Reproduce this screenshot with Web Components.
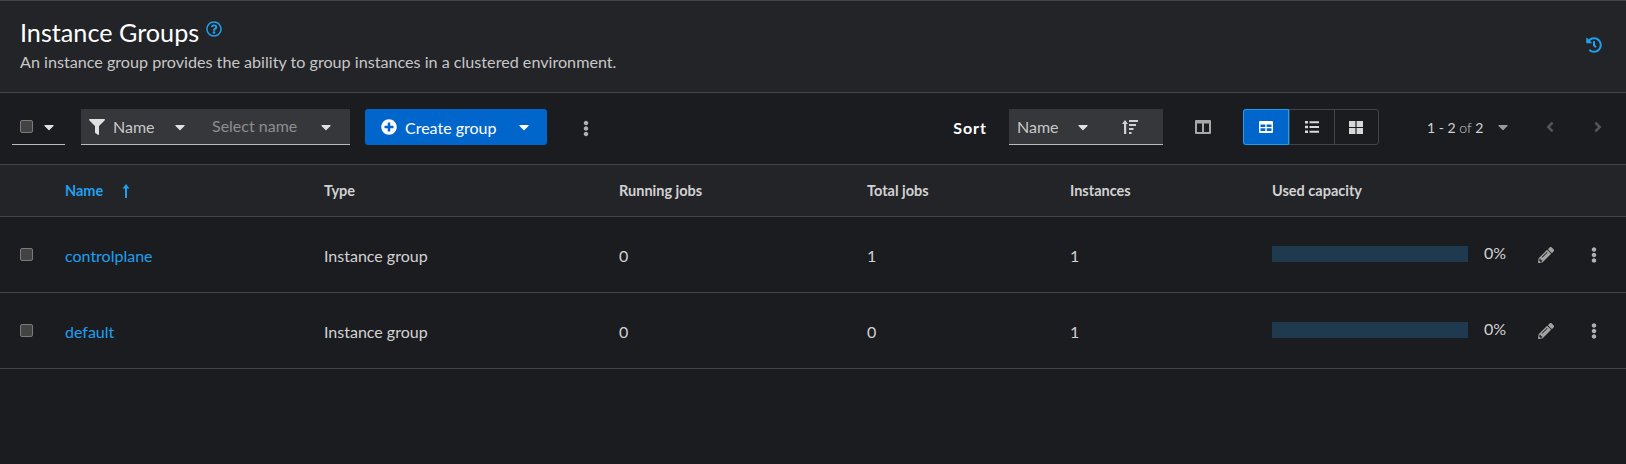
<!DOCTYPE html>
<html lang="en"><head><meta charset="utf-8"><title>Instance Groups</title>
<style>
html,body{margin:0;background:#1b1c20;height:100%;overflow:hidden}
body{font-family:Lato,"Noto Sans",sans-serif;color:#e0e0e0}
</style></head><body>
<ig-app></ig-app>
<script>
const P={
caret:['0 0 320 512','M31.3 192h257.3c17.8 0 26.7 21.5 14.1 34.1L174.1 354.8c-7.8 7.8-20.5 7.8-28.3 0L17.2 226.1C4.6 213.5 13.5 192 31.3 192z'],
filter:['0 0 512 512','M487.976 0H24.028C2.71 0-8.047 25.866 7.058 40.971L192 225.941V432c0 7.831 3.821 15.17 10.237 19.662l80 55.98C298.02 518.69 320 507.493 320 487.98V225.941l184.947-184.97C520.021 25.896 509.338 0 487.976 0z'],
plus:['0 0 512 512','M256 8C119 8 8 119 8 256s111 248 248 248 248-111 248-248S393 8 256 8zm144 276c0 6.6-5.4 12-12 12h-92v92c0 6.6-5.4 12-12 12h-56c-6.6 0-12-5.4-12-12v-92h-92c-6.6 0-12-5.4-12-12v-56c0-6.6 5.4-12 12-12h92v-92c0-6.6 5.4-12 12-12h56c6.6 0 12 5.4 12 12v92h92c6.6 0 12 5.4 12 12v56z'],
kebab:['0 0 192 512','M96 184c39.8 0 72 32.2 72 72s-32.2 72-72 72-72-32.2-72-72 32.2-72 72-72zM24 80c0 39.8 32.2 72 72 72s72-32.2 72-72S135.8 8 96 8 24 40.2 24 80zm0 352c0 39.8 32.2 72 72 72s72-32.2 72-72-32.2-72-72-72-72 32.2-72 72z'],
pencil:['0 0 512 512','M497.9 142.1l-46.1 46.1c-4.7 4.7-12.3 4.7-17 0l-111-111c-4.7-4.7-4.7-12.3 0-17l46.1-46.1c18.7-18.7 49.1-18.7 67.9 0l60.1 60.1c18.8 18.7 18.8 49.1 0 67.9zM284.2 99.8L21.6 362.4.4 483.9c-2.9 16.4 11.4 30.6 27.8 27.8l121.5-21.3 262.6-262.6c4.7-4.7 4.7-12.3 0-17l-111-111c-4.8-4.7-12.4-4.7-17.1 0zM124.1 339.9c-5.5-5.5-5.5-14.3 0-19.8l154-154c5.5-5.5 14.3-5.5 19.8 0s5.5 14.3 0 19.8l-154 154c-5.5 5.5-14.3 5.5-19.8 0zM88 424h48v36.3l-64.5 11.3-31.1-31.1L51.7 376H88v48z'],
help:['0 0 512 512','M256 8C119.043 8 8 119.083 8 256c0 136.997 111.043 248 248 248s248-111.003 248-248C504 119.083 392.957 8 256 8zm0 448c-110.532 0-200-89.431-200-200 0-110.495 89.472-200 200-200 110.491 0 200 89.471 200 200 0 110.53-89.431 200-200 200zm107.244-255.2c0 67.052-72.421 68.084-72.421 92.863V300c0 6.627-5.373 12-12 12h-45.647c-6.627 0-12-5.373-12-12v-8.659c0-35.745 27.1-50.034 47.579-61.516 17.561-9.845 28.324-16.541 28.324-29.579 0-17.246-21.999-28.693-39.784-28.693-23.189 0-33.894 10.977-48.942 29.969-4.057 5.12-11.46 6.071-16.666 2.124l-27.824-21.098c-5.107-3.872-6.251-11.066-2.644-16.363C184.846 131.491 214.94 112 261.794 112c49.071 0 101.45 38.304 101.45 88.8zM298 368c0 23.159-18.841 42-42 42s-42-18.841-42-42 18.841-42 42-42 42 18.841 42 42z'],
history:['0 0 512 512','M504 255.531c.253 136.64-111.18 248.372-247.82 248.468-59.015.042-113.223-20.53-155.822-54.911-11.077-8.94-11.905-25.541-1.839-35.607l11.267-11.267c8.609-8.609 22.353-9.551 31.891-1.984C173.062 425.135 212.781 440 256 440c101.705 0 184-82.311 184-184 0-101.705-82.311-184-184-184-48.814 0-93.149 18.969-126.068 49.932l50.754 50.754c10.08 10.08 2.941 27.314-11.313 27.314H24c-8.837 0-16-7.163-16-16V38.627c0-14.254 17.234-21.393 27.314-11.314l49.372 49.372C129.209 34.136 189.552 8 256 8c136.81 0 247.747 110.78 248 247.531zm-180.912 78.784l9.823-12.63c8.138-10.463 6.253-25.542-4.21-33.679L288 256.349V152c0-13.255-10.745-24-24-24h-16c-13.255 0-24 10.745-24 24v135.651l65.409 50.874c10.463 8.137 25.541 6.253 33.679-4.21z'],
sort:['0 0 16 14','M3 0L6 4H4.200V14H2V4H0zM7 0H16V2H7zM7 4H14V6H7zM7 8H11.500V10H7zM7 12H9.500V14H7z'],
columns:['0 0 16 14','M1 0H15a1 1 0 0 1 1 1V13a1 1 0 0 1-1 1H1a1 1 0 0 1-1-1V1a1 1 0 0 1 1-1zM2 3.500V12H7V3.500zM9 3.500V12H14V3.500z'],
tbl:['0 0 14 12','M1 0H13a1 1 0 0 1 1 1V11a1 1 0 0 1-1 1H1a1 1 0 0 1-1-1V1a1 1 0 0 1 1-1zM1.500 3.500V6H6.300V3.500zM7.700 3.500V6H12.500V3.500zM1.500 7.300V10H6.300V7.300zM7.700 7.300V10H12.500V7.300z'],
list:['0 0 14 12','M0 0H3V2.500H0zM4.500 .3H14V2.200H4.500zM0 4.800H3V7.300H0zM4.500 5.100H14V7H4.500zM0 9.500H3V12H0zM4.500 9.800H14V11.700H4.500z'],
grid:['0 0 14 13','M0 0H6.400V5.900H0zM7.600 0H14V5.900H7.600zM0 7.100H6.400V13H0zM7.600 7.100H14V13H7.600z'],
left:['0 0 256 512','M31.700 239l136-136c9.400-9.400 24.600-9.400 33.900 0l22.600 22.600c9.400 9.400 9.400 24.600 0 33.900L127.900 256l96.400 96.400c9.400 9.400 9.400 24.600 0 33.900L201.700 409c-9.400 9.400-24.600 9.400-33.900 0l-136-136c-9.500-9.400-9.500-24.600-.1-34z'],
right:['0 0 256 512','M224.300 273l-136 136c-9.400 9.400-24.600 9.400-33.900 0l-22.600-22.600c-9.400-9.400-9.400-24.600 0-33.900l96.400-96.400-96.400-96.400c-9.400-9.400-9.400-24.600 0-33.900L54.300 103c9.400-9.400 24.600-9.400 33.900 0l136 136c9.500 9.400 9.500 24.600.1 34z'],
up:['0 0 8 14','M4 0L7.500 4.500H5V14H3V4.500H.5z']
};
class IgIcon extends HTMLElement{
  constructor(){super();this.attachShadow({mode:'open'})}
  connectedCallback(){
    const [vb,d]=P[this.getAttribute('name')];
    const w=this.getAttribute('w')||16,h=this.getAttribute('h')||w;
    this.shadowRoot.innerHTML=`<style>:host{display:inline-flex;flex:none;line-height:0}</style><svg width="${w}" height="${h}" viewBox="${vb}" fill="currentColor" aria-hidden="true"><path fill-rule="evenodd" d="${d}"/></svg>`;
  }
}
customElements.define('ig-icon',IgIcon);

class IgCheck extends HTMLElement{
  constructor(){super();this.attachShadow({mode:'open'}).innerHTML=`<style>:host{display:block;box-sizing:border-box;width:13px;height:13px;background:#434343;border:1px solid #7a7a7a;border-radius:2px;flex:none}</style>`}
}
customElements.define('ig-check',IgCheck);

class IgHeader extends HTMLElement{
  constructor(){super();this.attachShadow({mode:'open'}).innerHTML=`<style>
  :host{display:flex;justify-content:space-between;box-sizing:border-box;height:93px;background:#232428;border-top:1px solid #444548;border-bottom:1px solid #444548;padding:15px 24px 0 20px}
  .t{display:flex;align-items:flex-start;gap:7px}
  h1{margin:0;font-size:25.2px;font-weight:400;line-height:32px;color:#fff}
  ig-icon{color:#1fa0ef;margin-top:5px}
  p{margin:3px 0 0;font-size:16.15px;line-height:22px;color:#c7c7c7}
  .h{margin-top:21px}
  </style><div><div class="t"><h1>Instance Groups</h1><ig-icon name="help" w="16"></ig-icon></div><p>An instance group provides the ability to group instances in a clustered environment.</p></div><ig-icon class="h" name="history" w="16"></ig-icon>`}
}
customElements.define('ig-header',IgHeader);

class IgToolbar extends HTMLElement{
  constructor(){super();this.attachShadow({mode:'open'}).innerHTML=`<style>
  :host{display:flex;align-items:center;box-sizing:border-box;height:72px;background:#1b1c20;border-bottom:1px solid #444548;padding:0 0 3px 12px;font-size:16px;color:#d2d2d2}
  .bulk{box-sizing:border-box;width:53px;height:36px;border-bottom:1px solid #b8bbbe;display:flex;align-items:center;padding-left:8px;gap:11px}
  .caret{color:#e0e0e0}
  .field{display:flex;align-items:center;box-sizing:border-box;height:36px;background:#36373a;border-bottom:1px solid #b8bbbe}
  .filter{margin-left:16px;width:269px;padding-left:8px}
  .filter .fi{color:#e0e0e0}
  .nm{margin-left:8px;width:62px;color:#c7c7c7}
  .sel{margin-left:27px;width:109px;color:#8d8e90;position:relative;top:-1px}
  .btn{margin-left:15px;box-sizing:border-box;width:182px;height:36px;background:#06c;border-radius:3px;color:#fff;display:flex;align-items:center;padding-left:16px}
  .btn span{margin-left:8px;width:114px}
  .keb{margin-left:36px;color:#b0b0b0;position:relative;top:1px}
  .sort{margin-left:auto;font-weight:700;color:#fff;margin-right:22px;letter-spacing:1px}
  .sortf{width:154px;padding-left:8px}
  .sortf .nm{margin:0;width:61px}
  .cols{margin-left:32px;color:#a8a8a8}
  .tg{margin-left:32px;display:flex;box-sizing:border-box;height:36px;width:136px;border-radius:3px;border:1px solid #444548}
  .tg div{display:flex;align-items:center;justify-content:center;color:#d8d8d8;box-sizing:border-box;flex:1;border-left:1px solid #444548}
  .tg div:first-child{background:#06c;color:#fff;outline:1px solid #1fa0ef;outline-offset:-1px;border:0;border-radius:3px 0 0 3px;flex:0 0 46px;margin:-1px 0 -1px -1px;height:36px}
  .pg{margin-left:48px;font-size:14px;color:#d2d2d2;width:55px;white-space:nowrap}
  .pc{margin-left:16px;color:#9a9a9a}
  .pv{margin-left:38px;color:#55565a}
  .nx{margin-left:40px;margin-right:24px;color:#55565a}
  </style>
  <div class="bulk"><ig-check></ig-check><ig-icon class="caret" name="caret" w="10" h="16"></ig-icon></div>
  <div class="field filter"><ig-icon class="fi" name="filter" w="16"></ig-icon><span class="nm">Name</span><ig-icon class="caret" name="caret" w="10" h="16"></ig-icon><span class="sel">Select name</span><ig-icon class="caret" name="caret" w="10" h="16"></ig-icon></div>
  <div class="btn"><ig-icon name="plus" w="16"></ig-icon><span>Create group</span><ig-icon name="caret" w="10" h="16"></ig-icon></div>
  <ig-icon class="keb" name="kebab" w="6" h="17"></ig-icon>
  <span class="sort">Sort</span>
  <div class="field sortf"><span class="nm">Name</span><ig-icon class="caret" name="caret" w="10" h="16"></ig-icon><ig-icon style="margin-left:34px" name="sort" w="16" h="14"></ig-icon></div>
  <ig-icon class="cols" name="columns" w="16" h="14"></ig-icon>
  <div class="tg"><div><ig-icon name="tbl" w="14" h="12"></ig-icon></div><div><ig-icon name="list" w="14" h="12"></ig-icon></div><div><ig-icon name="grid" w="14" h="13"></ig-icon></div></div>
  <span class="pg">1 - 2 <span style="font-weight:300">of</span> 2</span><ig-icon class="pc" name="caret" w="10" h="16"></ig-icon>
  <ig-icon class="pv" name="left" w="8" h="16"></ig-icon><ig-icon class="nx" name="right" w="8" h="16"></ig-icon>`}
}
customElements.define('ig-toolbar',IgToolbar);

const COLS='65px 259px 295px 248px 203px 202px 1fr';
class IgHeadRow extends HTMLElement{
  constructor(){super();this.attachShadow({mode:'open'}).innerHTML=`<style>
  :host{display:grid;grid-template-columns:${COLS};align-items:center;box-sizing:border-box;height:53px;margin-top:-1px;background:#232428;border-top:1px solid #444548;border-bottom:1px solid #444548;font-size:14.5px;font-weight:700;color:#d2d2d2}
  .n{color:#1fa0ef;display:flex;align-items:center;gap:19px}
  </style><span></span><span class="n">Name <ig-icon name="up" w="8" h="14"></ig-icon></span><span>Type</span><span>Running jobs</span><span>Total jobs</span><span>Instances</span><span>Used capacity</span>`}
}
customElements.define('ig-head-row',IgHeadRow);

class IgRow extends HTMLElement{
  constructor(){super();this.attachShadow({mode:'open'})}
  connectedCallback(){
    const a=k=>this.getAttribute(k);
    this.shadowRoot.innerHTML=`<style>
    :host{display:grid;grid-template-columns:${COLS};align-items:center;box-sizing:border-box;height:76px;border-bottom:1px solid #444548;font-size:16px;color:#d2d2d2}
    .c{padding-left:20px;margin-top:-1px}
    .v{padding-top:2px}
    a{color:#1fa0ef;text-decoration:none}
    .cap{display:flex;align-items:center;margin-top:-2px}
    .bar{width:196px;height:16px;background:#1f3a4f}
    .pc{margin-left:16px;margin-top:-2px;width:46px}
    .ed{margin-left:8px;color:#a3a3a3;margin-top:2px}
    .kb{margin-left:37px;color:#b0b0b0;margin-top:2px}
    </style><div class="c"><ig-check></ig-check></div><a class="v" href="#">${a('name')}</a><span class="v">Instance group</span><span class="v">0</span><span class="v">${a('total')}</span><span class="v">1</span>
    <div class="cap"><div class="bar"></div><span class="pc">0%</span><ig-icon class="ed" name="pencil" w="16"></ig-icon><ig-icon class="kb" name="kebab" w="6" h="16"></ig-icon></div>`;
  }
}
customElements.define('ig-row',IgRow);

class IgApp extends HTMLElement{
  constructor(){super();this.attachShadow({mode:'open'}).innerHTML=`<style>:host{display:block;background:#1b1c20;height:464px}</style>
  <ig-header></ig-header><ig-toolbar></ig-toolbar><ig-head-row></ig-head-row>
  <ig-row name="controlplane" total="1"></ig-row><ig-row name="default" total="0"></ig-row>`}
}
customElements.define('ig-app',IgApp);
</script>
</body></html>
